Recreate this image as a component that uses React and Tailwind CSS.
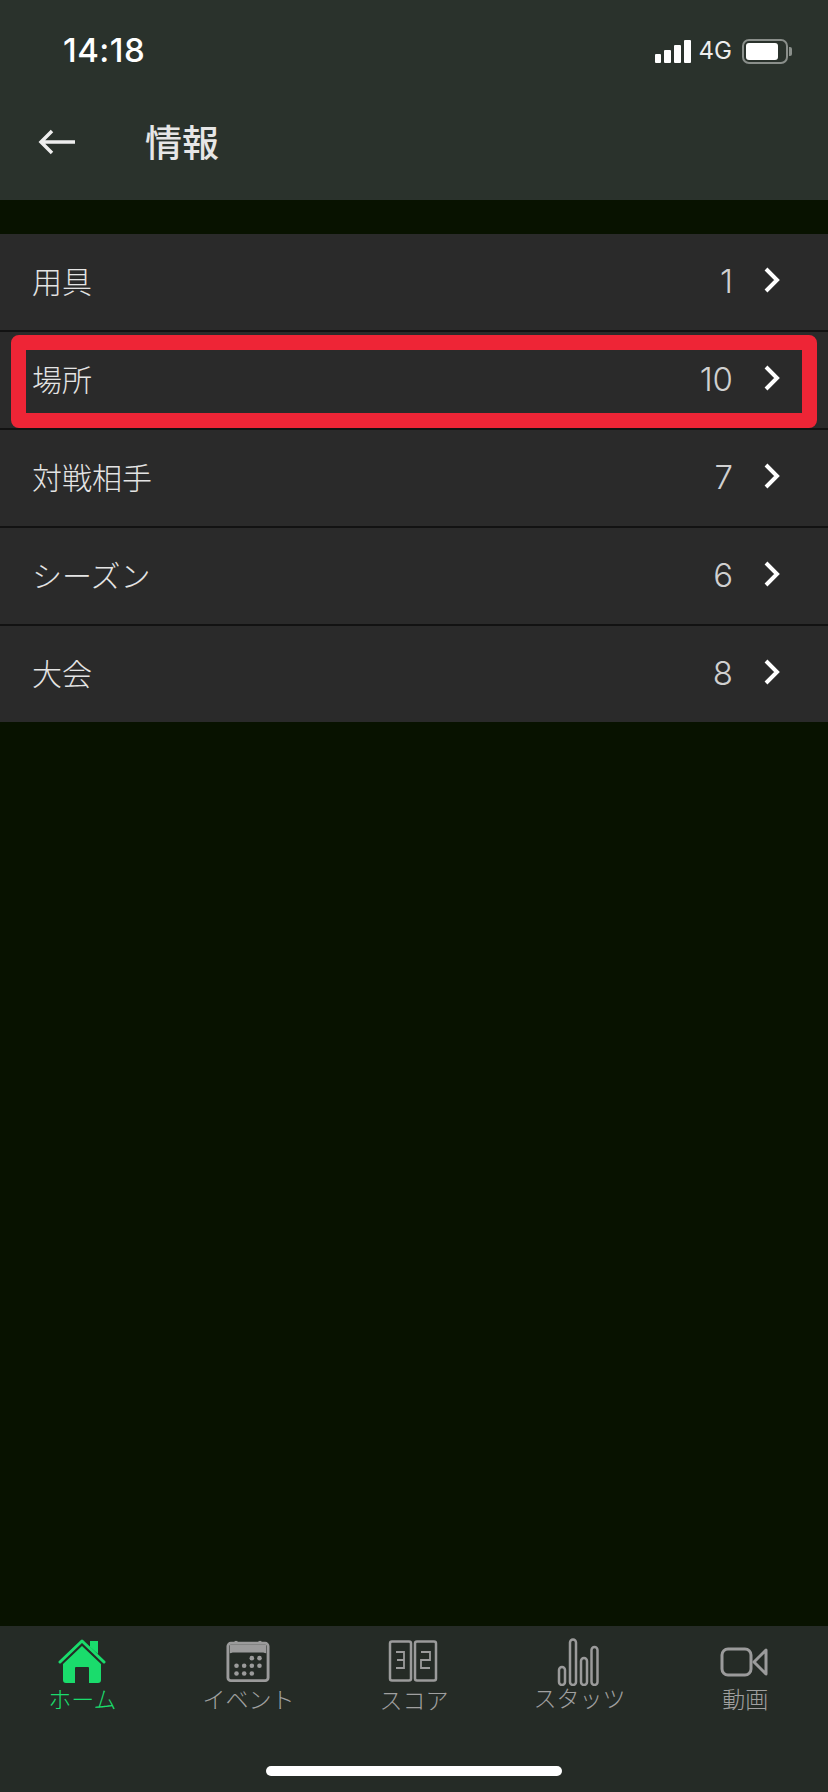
import React from "react";

const jp = "font-['Noto_Sans_CJK_JP','Noto_Sans',sans-serif]";

const rows = [
  { label: "用具", count: 1 },
  { label: "場所", count: 10, marked: true },
  { label: "対戦相手", count: 7 },
  { label: "シーズン", count: 6 },
  { label: "大会", count: 8 },
];

const HomeIcon = () => (
  <svg width="48" height="46" viewBox="0 0 48 46">
    <path d="M2 24 L24 3 L46 24" fill="none" stroke="#1adc6c" strokeWidth="3" strokeLinecap="round" strokeLinejoin="round" />
    <path d="M32 3h8v13l-8-7z" fill="#1adc6c" />
    <path d="M24 8 L43 26 V42 a3 3 0 0 1-3 3 H31 V30 a1 1 0 0 0-1-1 H18 a1 1 0 0 0-1 1 V45 H8 a3 3 0 0 1-3-3 V26z" fill="#1adc6c" />
  </svg>
);

const CalendarIcon = () => (
  <svg width="44" height="44" viewBox="0 0 46 44" fill="#9b9b9b">
    <rect x="2" y="3.5" width="42" height="39" rx="3" fill="none" stroke="#9b9b9b" strokeWidth="3" />
    <path d="M4 5h38v9a18 18 0 0 0-3-1H7a18 18 0 0 0-3 1z" />
    <rect x="9" y="1" width="3" height="3" />
    <rect x="34" y="1" width="3" height="3" />
    {[[27, 19], [35, 19], [11, 27], [19, 27], [27, 27], [35, 27], [11, 35], [19, 35], [27, 35]].map(([cx, cy]) => (
      <circle key={`${cx}-${cy}`} cx={cx} cy={cy} r="2.4" />
    ))}
  </svg>
);

const ScoreIcon = () => (
  <svg width="50" height="42" viewBox="0 0 50 42" fill="none" stroke="#9b9b9b">
    <rect x="2" y="1.5" width="21" height="39" rx="2" strokeWidth="2.5" />
    <rect x="27" y="1.5" width="21" height="39" rx="2" strokeWidth="2.5" />
    <path d="M8 12h8v8H9M16 20v8H8" strokeWidth="1.8" />
    <path d="M33 12h9v8h-9v8h9" strokeWidth="1.8" />
  </svg>
);

const StatsIcon = () => (
  <svg width="42" height="48" viewBox="0 0 42 48" fill="none" stroke="#9b9b9b" strokeWidth="2.5">
    <rect x="2" y="29" width="6" height="18" rx="3" />
    <rect x="13" y="1.5" width="6" height="45.5" rx="3" />
    <rect x="24" y="20" width="6" height="27" rx="3" />
    <rect x="34.5" y="9" width="6" height="38" rx="3" />
  </svg>
);

const VideoIcon = () => (
  <svg width="48" height="30" viewBox="0 0 48 30" fill="none" stroke="#9b9b9b" strokeWidth="3" strokeLinejoin="round">
    <rect x="2" y="2" width="29" height="26" rx="6" />
    <path d="M34 15 L46 3 V27z" />
  </svg>
);

const tabs = [
  { label: "ホーム", icon: <HomeIcon />, active: true, iconBox: "h-[46px] pt-0 -ml-[2px]", labelBox: "-mt-[1px] -ml-[1px]" },
  { label: "イベント", icon: <CalendarIcon />, iconBox: "h-[46px] pt-[1px]", labelBox: "-mt-[1px]" },
  { label: "スコア", icon: <ScoreIcon />, iconBox: "h-[46px] pt-[2px] -ml-[2px]", labelBox: "mt-0" },
  { label: "スタッツ", icon: <StatsIcon />, iconBox: "h-[46px] pt-0 -ml-[4px]", labelBox: "-mt-[2px]" },
  { label: "動画", icon: <VideoIcon />, iconBox: "h-[46px] pt-[9px] -ml-[3px]", labelBox: "-mt-[1px]" },
];

export default function App() {
  return (
    <div className={`w-[828px] h-[1792px] flex flex-col bg-[#081200] ${jp}`}>
      {/* Header */}
      <div className="h-[200px] shrink-0 bg-[#2a322c] flex flex-col">
        <div className="h-[100px] flex items-center justify-between pl-[63px] pr-[36px] pt-[2px] text-white">
          <span className="font-['Inter',sans-serif] font-medium text-[33px] tracking-[0.5px]">14:18</span>
          <div className="flex items-center">
            <div className="flex items-end gap-[3px] h-[23px]">
              <span className="w-[6px] h-[9px] bg-white rounded-[1px]" />
              <span className="w-[7px] h-[13px] bg-white rounded-[1px]" />
              <span className="w-[7px] h-[18px] bg-white rounded-[1px]" />
              <span className="w-[7px] h-[23px] bg-white rounded-[1px]" />
            </div>
            <span className="font-['Inter',sans-serif] text-[24px] ml-[8px] text-[#eeeeee]">4G</span>
            <div className="ml-[10px] w-[46px] h-[25px] border-2 border-[#8a8f8b] rounded-[7px] p-[2px]">
              <div className="w-[32px] h-full bg-white rounded-[3px]" />
            </div>
            <span className="ml-[1px] w-[3px] h-[9px] bg-[#8a8f8b] rounded-r-[2px]" />
          </div>
        </div>
        <div className="flex items-center h-[84px] pl-[38px]">
          <svg width="37" height="26" viewBox="0 0 37 26" fill="none" stroke="#eeeeee" strokeWidth="3.5">
            <path d="M37 13H3M14 2L3 13l11 11" />
          </svg>
          <span className="ml-[70px] -mt-[2px] text-[37px] font-medium text-[#e6e6e6] leading-none">情報</span>
        </div>
      </div>

      {/* List */}
      <div className="mt-[34px] flex flex-col">
        {rows.map((row, i) => (
          <div
            key={row.label}
            className={`relative flex items-center justify-between bg-[#2a2a2a] pl-[32px] pr-[48px] pb-[2px] ${i < rows.length - 1 ? "h-[98px] border-b-2 border-[#121212]" : "h-[96px]"}`}
          >
            <span className="-mt-[2px] text-[30px] font-light text-[#e4e4e4]">{row.label}</span>
            <div className="flex items-center">
              <span className="mt-[2px] font-['Inter',sans-serif] font-light text-[33px] text-[#d0d0d0]">{row.count}</span>
              <svg className="ml-[31px] -mt-[2px]" width="16" height="26" viewBox="0 0 16 26" fill="none" stroke="#ffffff" strokeWidth="4">
                <path d="M2 2l11 11L2 24" />
              </svg>
            </div>
            {row.marked && (
              <div className="absolute left-[11px] right-[11px] top-[3px] h-[93px] border-[15px] border-[#ee2536] rounded-[8px]" />
            )}
          </div>
        ))}
      </div>

      {/* Tab bar */}
      <div className="mt-auto h-[166px] shrink-0 bg-[#252b26] flex flex-col">
        <div className="grid grid-cols-5 pt-[12px]">
          {tabs.map((tab) => (
            <div key={tab.label} className="flex flex-col items-center">
              <div className={tab.iconBox}>{tab.icon}</div>
              <span className={`${tab.labelBox} text-[23px] font-light leading-[30px] ${tab.active ? "text-[#1adc6c]" : "text-[#a0a0a0]"}`}>
                {tab.label}
              </span>
            </div>
          ))}
        </div>
        <div className="mt-auto mb-[16px] mx-auto w-[296px] h-[10px] rounded-full bg-white" />
      </div>
    </div>
  );
}
